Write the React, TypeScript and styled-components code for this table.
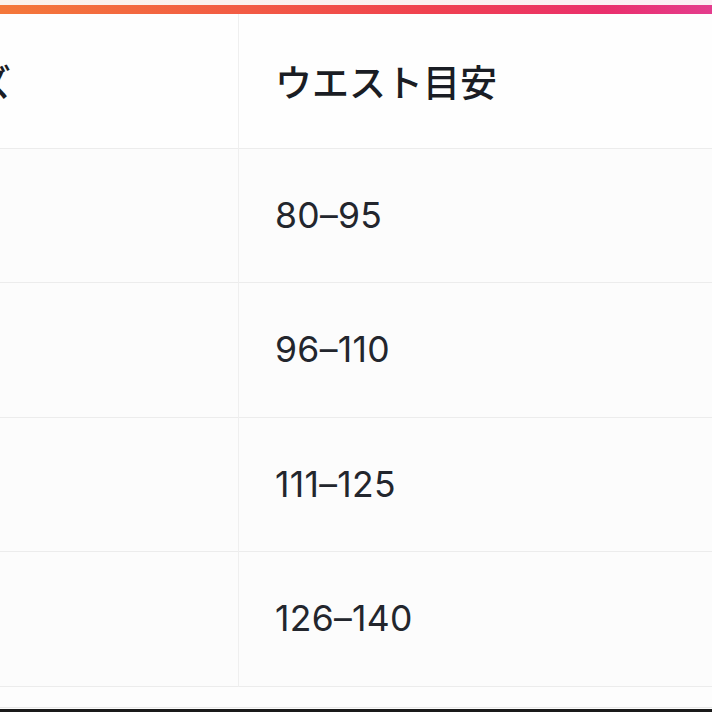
import styled, { createGlobalStyle } from "styled-components";

const GlobalStyle = createGlobalStyle`
  html, body {
    margin: 0;
    padding: 0;
    background: #fcfcfc;
    overflow: hidden;
  }
  body {
    font-family: Inter, "Noto Sans CJK JP", "Noto Sans", sans-serif;
    color: #1e2128;
  }
`;

const Page = styled.div`
  width: 712px;
  height: 712px;
  display: flex;
  flex-direction: column;
  overflow: hidden;
`;

const TopGlow = styled.div`
  height: 5px;
  flex-shrink: 0;
  background: linear-gradient(90deg, #fbf2ec, #fbf0f0 60%, #fbeef4);
`;

const AccentBar = styled.div`
  height: 9px;
  flex-shrink: 0;
  background: linear-gradient(90deg, #f4783a 0%, #f25a44 35%, #f0414f 60%, #ea2f6c 85%, #e43c8d 100%);
`;

// 表の左側はスクショで切れているので左にはみ出させる
const Table = styled.div`
  margin-left: -135px;
  width: calc(100% + 135px);
  display: grid;
  grid-template-columns: 374px 1fr;
  flex-shrink: 0;
`;

const Cell = styled.div<{ $head?: boolean; $first?: boolean }>`
  box-sizing: border-box;
  height: 134.5px;
  display: flex;
  align-items: center;
  padding-left: 36px;
  border-bottom: 1px solid #ececec;
  border-right: ${(p) => (p.$first ? "1px solid #efefef" : "none")};
  background: ${(p) => (p.$head ? "#fefefe" : "#fcfcfc")};
  font-size: ${(p) => (p.$head ? "37px" : "35.5px")};
  font-weight: ${(p) => (p.$head ? 500 : 400)};
  color: ${(p) => (p.$head ? "#1a1d24" : "#23262d")};
  letter-spacing: ${(p) => (p.$head ? "0" : "0.3px")};
  white-space: nowrap;
`;

const Footer = styled.div`
  height: 20px;
  flex-shrink: 0;
  border-bottom: 1px solid #e8e8e8;
  background: #fdfdfd;
`;

const BottomEdge = styled.div`
  flex: 1;
  margin-top: 1px;
  background: #1a1a1a;
`;

interface SizeRow {
  size: string;
  waist: string;
}

const rows: SizeRow[] = [
  { size: "M", waist: "80–95" },
  { size: "L", waist: "96–110" },
  { size: "XL", waist: "111–125" },
  { size: "XXL", waist: "126–140" },
];

function App() {
  return (
    <Page>
      <GlobalStyle />
      <TopGlow />
      <AccentBar />
      <Table>
        <Cell $head $first>サイズ</Cell>
        <Cell $head>ウエスト目安</Cell>
        {rows.map((row) => [
          <Cell key={row.size + "-s"} $first />,
          <Cell key={row.size + "-w"}>{row.waist}</Cell>,
        ])}
      </Table>
      <Footer />
      <BottomEdge />
    </Page>
  );
}

export default App;
